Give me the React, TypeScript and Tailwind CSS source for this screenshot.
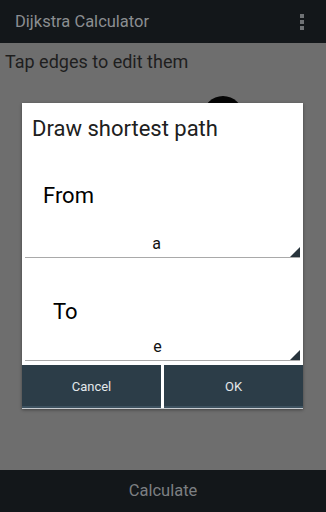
export default function App() {
  return (
    <div className="relative w-[326px] h-[512px] overflow-hidden bg-[#6e6e6e] font-['Roboto',sans-serif]">
      {/* action bar */}
      <div className="h-[43px] bg-[#13171a] flex items-center justify-between pl-[15px] pr-[22px]">
        <span className="text-[16.5px] text-[#8b8e91] pt-[1px]">Dijkstra Calculator</span>
        <div className="flex flex-col gap-[2px]">
          <span className="w-[4px] h-[4px] bg-[#6f7275]" />
          <span className="w-[4px] h-[4px] bg-[#6f7275]" />
          <span className="w-[4px] h-[4px] bg-[#6f7275]" />
        </div>
      </div>

      <p className="pl-[5px] pt-[5px] text-[18px] text-[#1e1e1e]">Tap edges to edit them</p>

      {/* graph node behind the dialog */}
      <div className="absolute left-[203px] top-[96px] w-[40px] h-[40px] rounded-full bg-[#050505]" />

      {/* bottom bar */}
      <div className="absolute left-0 bottom-0 w-full h-[42px] bg-[#13171a] flex items-center justify-center">
        <span className="text-[16.5px] text-[#7c7f82]">Calculate</span>
      </div>

      {/* dialog */}
      <div className="absolute left-[22px] top-[103px] w-[281px] bg-white shadow-[0_1px_3px_rgba(0,0,0,0.4)] border-b border-[#c8ccd0]">
        <div className="pl-[10px] pt-[11px] h-[55px] text-[22px] leading-[30px] text-[#202020]">Draw shortest path</div>

        <div className="px-[3px]">
          <div className="h-[100px] relative border-b border-[#a9a9a9]">
            <span className="absolute left-[18px] top-[23px] text-[22px] leading-[30px] text-black">From</span>
            <span className="absolute left-0 right-[12px] top-[74px] text-center text-[16px] text-[#111]">a</span>
            <svg className="absolute right-0 bottom-0" width="10" height="10" viewBox="0 0 10 10">
              <polygon points="10,0 10,10 0,10" fill="#28343c" />
            </svg>
          </div>

          <div className="h-[103px] relative border-b border-[#a9a9a9]">
            <span className="absolute left-[28px] top-[39px] text-[22px] leading-[30px] text-black">To</span>
            <span className="absolute left-0 right-[10px] top-[77px] text-center text-[16px] text-[#111]">e</span>
            <svg className="absolute right-0 bottom-0" width="10" height="10" viewBox="0 0 10 10">
              <polygon points="10,0 10,10 0,10" fill="#28343c" />
            </svg>
          </div>
        </div>

        <div className="mt-[4px] flex gap-[3px]">
          <button className="flex-1 h-[43px] pt-[2px] bg-[#2c3d48] border-b-[2px] border-[#3e5260] text-[13px] text-[#e3e8eb]">
            Cancel
          </button>
          <button className="flex-1 h-[43px] pt-[2px] bg-[#2c3d48] border-b-[2px] border-[#3e5260] text-[13px] text-[#e3e8eb]">
            OK
          </button>
        </div>
      </div>
    </div>
  );
}
